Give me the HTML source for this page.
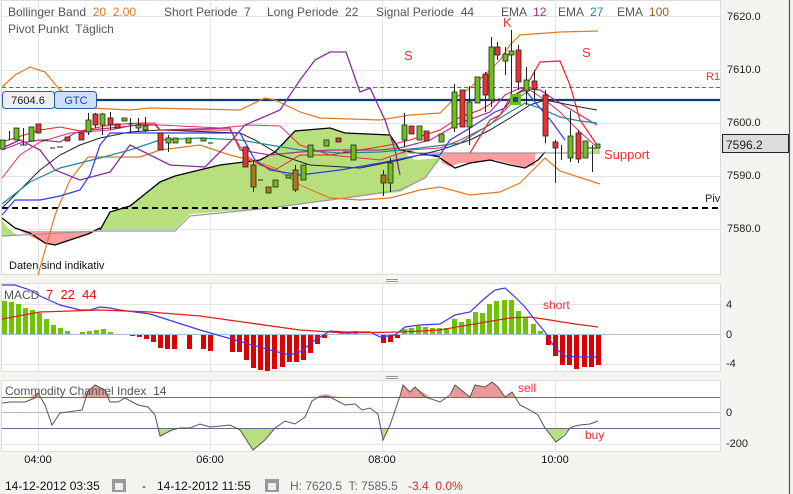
<!DOCTYPE html>
<html><head><meta charset="utf-8"><style>
html,body{margin:0;padding:0;background:#f5f4f0;width:793px;height:494px;overflow:hidden}
svg{display:block;font-family:"Liberation Sans",sans-serif}
text{white-space:pre}
</style></head><body>
<svg width="793" height="494" viewBox="0 0 793 494" xmlns="http://www.w3.org/2000/svg" xml:space="preserve">
<rect width="793" height="494" fill="#f5f4f0"/>
<line x1="789.5" y1="0" x2="789.5" y2="494" stroke="#555" stroke-width="1.2"/>
<rect x="1.5" y="0.5" width="719" height="274" fill="#fff" stroke="#ddd"/>
<g stroke="#e4e4e4" stroke-width="1">
<line x1="2" y1="16.5" x2="720" y2="16.5"/><line x1="2" y1="70.5" x2="720" y2="70.5"/><line x1="2" y1="123.5" x2="720" y2="123.5"/><line x1="2" y1="176.5" x2="720" y2="176.5"/><line x1="2" y1="229.5" x2="720" y2="229.5"/>
<line x1="38.5" y1="0" x2="38.5" y2="274"/><line x1="210.5" y1="0" x2="210.5" y2="274"/><line x1="382.5" y1="0" x2="382.5" y2="274"/><line x1="555.5" y1="0" x2="555.5" y2="274"/>
</g>
<polygon points="2,220 8,228 18,236 2,236" fill="#b7df7d"/>
<polygon points="20,231 30,236 45,243 55,245 70,240 88,235 96,231 20,231" fill="#ff9d9d"/>
<path d="M2,218 L15,228 L30,233 L45,243 L55,245 L70,240 L88,234 L100,228" stroke="#000" fill="none" stroke-width="1.3"/>
<polygon points="100,230 110,212 130,206 160,182 175,176 220,165 260,160 275,152 295,130 330,128 345,133 390,135 400,150 415,160 440,158 425,178 400,192 360,196 330,200 270,208 190,214 175,230" fill="#b7df7d"/>
<path d="M100,230 L110,212 L130,206 L160,182 L175,176 L220,165 L260,160 L275,152 L295,131 L330,128 L345,133 L390,135 L400,150 L440,157" stroke="#000" fill="none" stroke-width="1.3"/>
<path d="M2,236 L100,231 L175,231 L190,216 L270,208 L330,200 L360,196 L400,190 L425,178 L440,158" stroke="#999" fill="none" stroke-width="1.2"/>
<polygon points="440,153 535,153 535,165 525,168 515,165 495,160 475,163 460,163 450,167 442,163" fill="#ff9d9d"/>
<path d="M440,158 L455,168 L470,163 L490,160 L510,165 L525,168 L538,160 L545,152" stroke="#000" fill="none" stroke-width="1.3"/>
<path d="M400,153 L600,153" stroke="#999" stroke-width="1.2"/>
<polygon points="588,153 600,153 600,145" fill="#b7df7d"/>
<line x1="2" y1="87.5" x2="720" y2="87.5" stroke="#e33" stroke-dasharray="4,3"/>
<line x1="2" y1="208" x2="720" y2="208" stroke="#000" stroke-width="2" stroke-dasharray="6,4"/>
<line x1="97" y1="100" x2="720" y2="100" stroke="#0a3c7a" stroke-width="2.2"/>
<path d="M2,87 L15,75 L30,67 L45,72 L60,90 L90,108 L130,110 L150,108 L240,110 L265,98 L275,100 L300,112 L320,118 L380,120 L410,115 L440,113 L455,98 L470,88 L490,70 L500,60 L510,45 L520,35 L560,32 L598,31" stroke="#e07a20" fill="none" stroke-width="1.2"/>
<path d="M38,275 L55,215 L70,180 L88,157 L140,157 L160,150 L200,145 L230,155 L250,160 L275,168 L300,185 L330,198 L360,200 L390,198 L420,190 L440,187 L470,195 L500,192 L520,183 L535,168 L545,158 L560,171 L600,184" stroke="#e07a20" fill="none" stroke-width="1.2"/>
<path d="M2,148 L20,140 L40,150 L55,170 L80,180 L110,172 L130,145 L170,165 L205,167 L230,142 L245,125 L280,110 L300,80 L315,60 L330,52 L346,52 L360,92 L370,88 L385,120 L395,150 L400,175" stroke="#8e2a9e" fill="none" stroke-width="1.3"/>
<path d="M2,178 L20,155 L40,142 L70,133 L110,130 L140,124 L220,128 L250,125 L280,126 L300,145 L330,155 L380,160 L410,150 L440,148 L460,140 L490,125 L515,100 L530,90 L545,100 L560,112 L580,132 L598,148" stroke="#e03060" fill="none" stroke-width="1"/>
<path d="M2,150 L20,143 L40,140 L60,142 L75,133 L90,130 L110,128 L140,125 L155,125 L160,130 L230,128 L240,150 L270,155 L300,152 L330,150 L350,150 L380,150 L400,148 L430,140 L460,123 L490,112 L505,95 L520,88 L540,90 L555,100 L575,112 L597,125" stroke="#b23090" fill="none" stroke-width="1.2"/>
<path d="M2,208 L40,170 L60,155 L80,145 L100,138 L130,132 L160,130 L240,133 L255,140 L280,155 L310,165 L360,168 L400,160 L440,150 L470,140 L490,130 L510,118 L530,105 L545,100 L560,103 L580,107 L597,110" stroke="#222" fill="none" stroke-width="1"/>
<path d="M2,204 L30,182 L60,168 L100,158 L130,150 L160,140 L200,138 L240,140 L270,145 L300,150 L340,153 L380,152 L420,148 L460,143 L500,118 L525,103 L540,108 L560,117 L580,121 L597,123" stroke="#1c8a9a" fill="none" stroke-width="1.2"/>
<path d="M2,215 L15,200 L40,200 L60,196 L80,190 L90,175 L100,145 L110,133 L240,133 L255,160 L270,170 L300,175 L340,170 L380,163 L420,155 L440,155 L450,140 L470,128 L495,112 L505,108 L515,95 L525,90 L540,108 L552,122 L565,140" stroke="#2a3cf0" fill="none" stroke-width="1.2"/>
<path d="M470,153 L490,120 L500,115 L510,98 L525,88 L540,62 L560,61 L570,85 L580,120 L597,145" stroke="#f02020" fill="none" stroke-width="1.2"/>
<path d="M2,142 L40,130 L60,127 L80,131 L110,125 L140,123 L155,123 L160,130 L230,130 L245,155 L260,165 L275,170 L300,155 L330,155 L360,150 L390,145 L410,140 L440,130 L460,117 L480,110 L500,98" stroke="#f02020" fill="none" stroke-width="1"/>
<g stroke="#222" stroke-width="1">
<line x1="9.5" y1="131" x2="9.5" y2="140"/><line x1="23.5" y1="128" x2="23.5" y2="145"/><line x1="88.5" y1="113" x2="88.5" y2="135"/><line x1="95.5" y1="113" x2="95.5" y2="128"/><line x1="102.5" y1="113" x2="102.5" y2="135"/><line x1="110.5" y1="112" x2="110.5" y2="130"/><line x1="130.5" y1="118" x2="130.5" y2="132"/><line x1="138.5" y1="118" x2="138.5" y2="131"/><line x1="145.5" y1="117" x2="145.5" y2="132"/><line x1="168.5" y1="135" x2="168.5" y2="152"/>
<line x1="253.5" y1="160" x2="253.5" y2="192"/><line x1="295.5" y1="165" x2="295.5" y2="192"/><line x1="390.5" y1="158" x2="390.5" y2="192"/><line x1="383.5" y1="170" x2="383.5" y2="196"/><line x1="404.5" y1="113" x2="404.5" y2="147"/><line x1="454.5" y1="84" x2="454.5" y2="132"/><line x1="469.5" y1="86" x2="469.5" y2="145"/><line x1="485.5" y1="72" x2="485.5" y2="112"/><line x1="491.5" y1="37" x2="491.5" y2="107"/><line x1="497.5" y1="42" x2="497.5" y2="60"/><line x1="505.5" y1="47" x2="505.5" y2="75"/><line x1="511.5" y1="30" x2="511.5" y2="100"/><line x1="518.5" y1="45" x2="518.5" y2="90"/><line x1="526.5" y1="67" x2="526.5" y2="105"/><line x1="534.5" y1="70" x2="534.5" y2="100"/><line x1="545.5" y1="90" x2="545.5" y2="143"/><line x1="555.5" y1="140" x2="555.5" y2="183"/><line x1="561.5" y1="145" x2="561.5" y2="160"/><line x1="570.5" y1="111" x2="570.5" y2="162"/><line x1="578.5" y1="130" x2="578.5" y2="163"/><line x1="592.5" y1="145" x2="592.5" y2="172"/>
</g>
<g stroke="#222" stroke-width="0.8">
<rect x="0" y="140" width="5" height="9" fill="#6fbf1a"/><rect x="14" y="128" width="5" height="12" fill="#6fbf1a"/><rect x="29" y="127" width="5" height="14" fill="#6fbf1a"/><rect x="36" y="124" width="5" height="9" fill="#f03030"/><rect x="65" y="137" width="5" height="4" fill="#f03030"/><rect x="79" y="133" width="5" height="7" fill="#f03030"/><rect x="86" y="120" width="5" height="12" fill="#6fbf1a"/><rect x="93" y="114" width="5" height="11" fill="#f03030"/><rect x="100" y="114" width="5" height="11" fill="#6fbf1a"/><rect x="108" y="118" width="5" height="7" fill="#f03030"/><rect x="115" y="124" width="5" height="4" fill="#f03030"/><rect x="122" y="118" width="5" height="3" fill="#6fbf1a"/><rect x="136" y="125" width="5" height="3" fill="#6fbf1a"/><rect x="143" y="126" width="5" height="4" fill="#6fbf1a"/><rect x="158" y="133" width="5" height="17" fill="#f03030"/><rect x="166" y="138" width="5" height="5" fill="#6fbf1a"/><rect x="173" y="138" width="5" height="5" fill="#6fbf1a"/><rect x="186" y="138" width="5" height="5" fill="#6fbf1a"/><rect x="201" y="138" width="5" height="3" fill="#6fbf1a"/>
<rect x="243" y="147" width="5" height="20" fill="#f03030"/><rect x="251" y="165" width="5" height="22" fill="#b07a1a"/><rect x="266" y="187" width="5" height="6" fill="#b07a1a"/><rect x="273" y="180" width="5" height="7" fill="#6fbf1a"/><rect x="286" y="175" width="5" height="3" fill="#6fbf1a"/><rect x="293" y="170" width="5" height="20" fill="#b07a1a"/><rect x="301" y="165" width="5" height="15" fill="#6fbf1a"/><rect x="308" y="145" width="5" height="12" fill="#6fbf1a"/><rect x="324" y="140" width="5" height="6" fill="#6fbf1a"/><rect x="336" y="138" width="5" height="4" fill="#f03030"/><rect x="351" y="145" width="5" height="15" fill="#6fbf1a"/>
<rect x="381" y="175" width="5" height="8" fill="#b07a1a"/><rect x="388" y="163" width="5" height="20" fill="#6fbf1a"/><rect x="402" y="125" width="5" height="15" fill="#6fbf1a"/><rect x="409" y="126" width="5" height="8" fill="#f03030"/><rect x="417" y="126" width="5" height="14" fill="#6fbf1a"/><rect x="424" y="131" width="5" height="10" fill="#f03030"/><rect x="439" y="134" width="5" height="8" fill="#6fbf1a"/><rect x="452" y="92" width="5" height="36" fill="#6fbf1a"/><rect x="460" y="90" width="5" height="37" fill="#f03030"/><rect x="467" y="102" width="5" height="25" fill="#6fbf1a"/><rect x="475" y="77" width="5" height="26" fill="#6fbf1a"/><rect x="483" y="74" width="5" height="21" fill="#f03030"/><rect x="489" y="47" width="5" height="53" fill="#6fbf1a"/><rect x="495" y="47" width="5" height="8" fill="#f03030"/><rect x="503" y="54" width="5" height="7" fill="#6fbf1a"/><rect x="509" y="51" width="5" height="4" fill="#6fbf1a"/><rect x="516" y="50" width="5" height="32" fill="#f03030"/><rect x="524" y="80" width="5" height="11" fill="#6fbf1a"/><rect x="532" y="81" width="5" height="8" fill="#f03030"/><rect x="543" y="95" width="5" height="41" fill="#f03030"/><rect x="553" y="142" width="5" height="6" fill="#f03030"/><rect x="568" y="136" width="5" height="22" fill="#6fbf1a"/><rect x="576" y="133" width="5" height="26" fill="#f03030"/><rect x="583" y="141" width="5" height="17" fill="#6fbf1a"/><rect x="596" y="144" width="4" height="4" fill="#6fbf1a"/>
</g>
<g stroke="#222"><line x1="20" y1="145" x2="27" y2="145"/><line x1="42" y1="140" x2="48" y2="140"/><line x1="50" y1="148" x2="55" y2="148"/><line x1="57" y1="147" x2="63" y2="147"/><line x1="128" y1="124" x2="133" y2="124"/><line x1="208" y1="143" x2="213" y2="143"/><line x1="258" y1="180" x2="263" y2="180"/><line x1="343" y1="152" x2="348" y2="152"/><line x1="588" y1="148" x2="596" y2="148"/></g>
<rect x="510" y="94" width="11" height="11" fill="#6fbf1a"/><rect x="513" y="97" width="5" height="5" fill="#1a3ccc"/>
<rect x="2.5" y="91.5" width="52" height="17" rx="3" fill="#eee" stroke="#2a5ab0"/>
<rect x="54.5" y="91.5" width="42" height="17" rx="3" fill="#cce0fa" stroke="#2a5ab0"/>
<text x="28" y="104" font-size="11" fill="#222" text-anchor="middle">7604.6</text>
<text x="76" y="104" font-size="11" fill="#1a44b0" text-anchor="middle">GTC</text>
<g font-size="12" fill="#555">
<text x="8" y="16">Bollinger Band  <tspan fill="#e07a20">20  2.00</tspan></text>
<text x="164" y="16">Short Periode  7</text>
<text x="267" y="16">Long Periode  22</text>
<text x="376" y="16">Signal Periode  44</text>
<text x="501" y="16">EMA  <tspan fill="#b23090">12</tspan></text>
<text x="558" y="16">EMA  <tspan fill="#1c8a9a">27</tspan></text>
<text x="617" y="16">EMA  <tspan fill="#8a6a20">100</tspan></text>
<text x="8" y="33">Pivot Punkt  Täglich</text>
</g>
<g font-size="13" fill="#f03030"><text x="404" y="60">S</text><text x="503" y="27">K</text><text x="582" y="57">S</text><text x="604" y="159">Support</text></g>
<text x="706" y="80" font-size="11" fill="#e33">R1</text>
<text x="705" y="202" font-size="11" fill="#222">Piv</text>
<text x="9" y="269" font-size="11" fill="#111">Daten sind indikativ</text>
<g font-size="11" fill="#222"><text x="727" y="20">7620.0</text><text x="727" y="73">7610.0</text><text x="727" y="126">7600.0</text><text x="727" y="179">7590.0</text><text x="727" y="232">7580.0</text></g>
<rect x="722.5" y="134.5" width="66" height="18" fill="#ddd" stroke="#222"/>
<text x="726" y="149" font-size="12" fill="#222">7596.2</text>
<g stroke="#999"><line x1="386" y1="279.5" x2="398" y2="279.5"/><line x1="386" y1="281.5" x2="398" y2="281.5"/><line x1="386" y1="376.5" x2="398" y2="376.5"/><line x1="386" y1="378.5" x2="398" y2="378.5"/></g>
<rect x="1.5" y="283.5" width="719" height="88" fill="#fff" stroke="#ddd"/>
<g stroke="#e4e4e4"><line x1="2" y1="304.5" x2="720" y2="304.5"/><line x1="2" y1="364.5" x2="720" y2="364.5"/><line x1="38.5" y1="284" x2="38.5" y2="371"/><line x1="210.5" y1="284" x2="210.5" y2="371"/><line x1="382.5" y1="284" x2="382.5" y2="371"/><line x1="555.5" y1="284" x2="555.5" y2="371"/></g>
<line x1="2" y1="334.5" x2="720" y2="334.5" stroke="#a8c0d0"/>
<g fill="#6fc400">
<rect x="2" y="301" width="5" height="33"/><rect x="9" y="302" width="5" height="32"/><rect x="16" y="304" width="5" height="30"/><rect x="23" y="308" width="5" height="26"/><rect x="30" y="310" width="5" height="24"/><rect x="37" y="313" width="5" height="21"/><rect x="44" y="319" width="5" height="15"/><rect x="51" y="325" width="5" height="9"/><rect x="58" y="328" width="5" height="6"/><rect x="65" y="331" width="5" height="3"/><rect x="80" y="332" width="5" height="2"/><rect x="87" y="331" width="5" height="3"/><rect x="94" y="330" width="5" height="4"/><rect x="101" y="329" width="5" height="5"/><rect x="108" y="332" width="5" height="2"/>
<rect x="339" y="332" width="5" height="2"/><rect x="346" y="332" width="5" height="2"/><rect x="353" y="331" width="5" height="3"/>
<rect x="402" y="329" width="5" height="5"/><rect x="409" y="328" width="5" height="6"/><rect x="416" y="326" width="5" height="8"/><rect x="423" y="327" width="5" height="7"/><rect x="430" y="328" width="5" height="6"/><rect x="437" y="328" width="5" height="6"/><rect x="444" y="328" width="5" height="6"/><rect x="452" y="319" width="5" height="15"/><rect x="459" y="322" width="5" height="12"/><rect x="466" y="319" width="5" height="15"/><rect x="473" y="312" width="5" height="22"/><rect x="480" y="313" width="5" height="21"/><rect x="487" y="304" width="5" height="30"/><rect x="494" y="301" width="5" height="33"/><rect x="502" y="300" width="5" height="34"/><rect x="509" y="300" width="5" height="34"/><rect x="516" y="311" width="5" height="23"/><rect x="523" y="317" width="5" height="17"/><rect x="531" y="324" width="5" height="10"/><rect x="538" y="331" width="5" height="3"/>
</g>
<g fill="#dd0000">
<rect x="130" y="335" width="5" height="1"/><rect x="137" y="335" width="5" height="2"/><rect x="144" y="335" width="5" height="4"/><rect x="151" y="335" width="5" height="7"/><rect x="158" y="335" width="5" height="13"/><rect x="165" y="335" width="5" height="14"/><rect x="172" y="335" width="5" height="14"/><rect x="187" y="335" width="5" height="14"/><rect x="201" y="335" width="5" height="14"/><rect x="208" y="335" width="5" height="16"/><rect x="230" y="335" width="5" height="17"/><rect x="237" y="335" width="5" height="17"/><rect x="244" y="335" width="5" height="25"/><rect x="251" y="335" width="5" height="33"/><rect x="258" y="335" width="5" height="35"/><rect x="265" y="335" width="5" height="36"/><rect x="272" y="335" width="5" height="34"/><rect x="280" y="335" width="5" height="32"/><rect x="287" y="335" width="5" height="27"/><rect x="294" y="335" width="5" height="27"/><rect x="301" y="335" width="5" height="25"/><rect x="308" y="335" width="5" height="18"/><rect x="315" y="335" width="5" height="9"/><rect x="322" y="335" width="5" height="3"/>
<rect x="381" y="335" width="5" height="8"/><rect x="388" y="335" width="5" height="7"/><rect x="395" y="335" width="5" height="3"/>
<rect x="546" y="335" width="5" height="10"/><rect x="553" y="335" width="5" height="21"/><rect x="560" y="335" width="5" height="30"/><rect x="567" y="335" width="5" height="30"/><rect x="574" y="335" width="5" height="34"/><rect x="582" y="335" width="5" height="32"/><rect x="589" y="335" width="5" height="32"/><rect x="596" y="335" width="5" height="30"/>
</g>
<path d="M2,285 L15,285 L30,290 L40,296 L60,305 L80,310 L90,310 L100,307 L110,308 L120,310 L150,314 L200,330 L270,350 L290,355 L300,352 L315,340 L330,331 L345,332 L370,332 L380,337 L395,335 L405,327 L420,325 L440,324 L455,315 L470,312 L485,298 L495,290 L505,288 L515,297 L525,307 L535,320 L545,332 L555,348 L565,356 L580,357 L597,357" stroke="#3a3ae8" fill="none" stroke-width="1.2"/>
<path d="M2,319 L40,312 L100,310 L150,312 L200,316 L250,323 L300,330 L345,333 L400,332 L440,330 L480,323 L510,318 L530,317 L550,320 L575,324 L598,327" stroke="#dd2020" fill="none" stroke-width="1.3"/>
<text x="4" y="299" font-size="12" fill="#555">MACD  <tspan fill="#dd1010" font-size="13">7  22  44</tspan></text>
<text x="543" y="309" font-size="12" fill="#f03030">short</text>
<g font-size="11" fill="#222"><text x="726" y="308">4</text><text x="726" y="338">0</text><text x="726" y="367">-4</text></g>
<rect x="1.5" y="380.5" width="719" height="71" fill="#fff" stroke="#ddd"/>
<g stroke="#e4e4e4"><line x1="2" y1="444.5" x2="720" y2="444.5"/><line x1="38.5" y1="381" x2="38.5" y2="451"/><line x1="210.5" y1="381" x2="210.5" y2="451"/><line x1="382.5" y1="381" x2="382.5" y2="451"/><line x1="555.5" y1="381" x2="555.5" y2="451"/></g>
<polygon points="30,397 37,393 40,397" fill="#e89a9a"/>
<polygon points="82,397 95,385 105,390 110,397" fill="#e89a9a"/>
<polygon points="320,397 325,394 332,396 340,397" fill="#e89a9a"/>
<polygon points="400,397 403,385 410,392 415,387 430,397 450,397 455,385 465,393 470,397 475,385 485,387 492,382 498,387 505,397 512,392 515,397" fill="#e89a9a"/>
<polygon points="158,428 160,437 175,428" fill="#b7df7d"/>
<polygon points="238,428 253,450 265,440 275,428" fill="#b7df7d"/>
<polygon points="380,428 383,439 388,428" fill="#b7df7d"/>
<polygon points="545,428 556,442 570,428" fill="#b7df7d"/>
<line x1="2" y1="397.5" x2="720" y2="397.5" stroke="#6a6a8a"/>
<line x1="2" y1="412.5" x2="720" y2="412.5" stroke="#a8c0d0"/>
<line x1="2" y1="428.5" x2="720" y2="428.5" stroke="#6a6a8a"/>
<path d="M2,403 L10,402 L25,402 L35,398 L38,393 L45,405 L52,425 L60,413 L75,411 L82,410 L88,391 L95,385 L105,390 L110,402 L118,402 L125,398 L138,405 L148,407 L155,415 L160,436 L172,430 L180,428 L190,428 L200,424 L210,427 L230,425 L240,430 L253,450 L265,440 L275,428 L285,421 L295,424 L305,417 L312,401 L320,396 L330,397 L345,405 L355,404 L362,410 L370,408 L378,414 L383,440 L390,425 L400,396 L403,385 L410,392 L415,387 L425,397 L440,402 L450,395 L455,385 L465,393 L470,397 L475,385 L485,387 L492,382 L498,387 L505,397 L512,392 L520,405 L530,410 L538,415 L545,428 L556,442 L565,435 L570,428 L575,426 L580,425 L590,424 L598,421" stroke="#555" fill="none" stroke-width="1"/>
<text x="5" y="395" font-size="12" fill="#555">Commodity Channel Index  14</text>
<text x="518" y="392" font-size="12" fill="#f03030">sell</text>
<text x="585" y="439" font-size="12" fill="#f03030">buy</text>
<g font-size="11" fill="#222"><text x="726" y="416">0</text><text x="726" y="447">-200</text></g>
<g font-size="11" fill="#111" text-anchor="middle"><text x="38" y="463">04:00</text><text x="210" y="463">06:00</text><text x="382" y="463">08:00</text><text x="555" y="463">10:00</text></g>
<g font-size="12" fill="#111">
<text x="5" y="490">14-12-2012 03:35</text>
<rect x="112" y="479" width="14" height="13" fill="#999"/><rect x="115" y="483" width="8" height="7" fill="#eee"/>
<text x="142" y="490">-</text>
<text x="157" y="490">14-12-2012 11:55</text>
<rect x="265" y="479" width="14" height="13" fill="#999"/><rect x="268" y="483" width="8" height="7" fill="#eee"/>
<text x="290" y="490" fill="#666">H: 7620.5  T: 7585.5</text>
<text x="408" y="490" fill="#d03030">-3.4  0.0%</text>
</g>
</svg>
</body></html>
